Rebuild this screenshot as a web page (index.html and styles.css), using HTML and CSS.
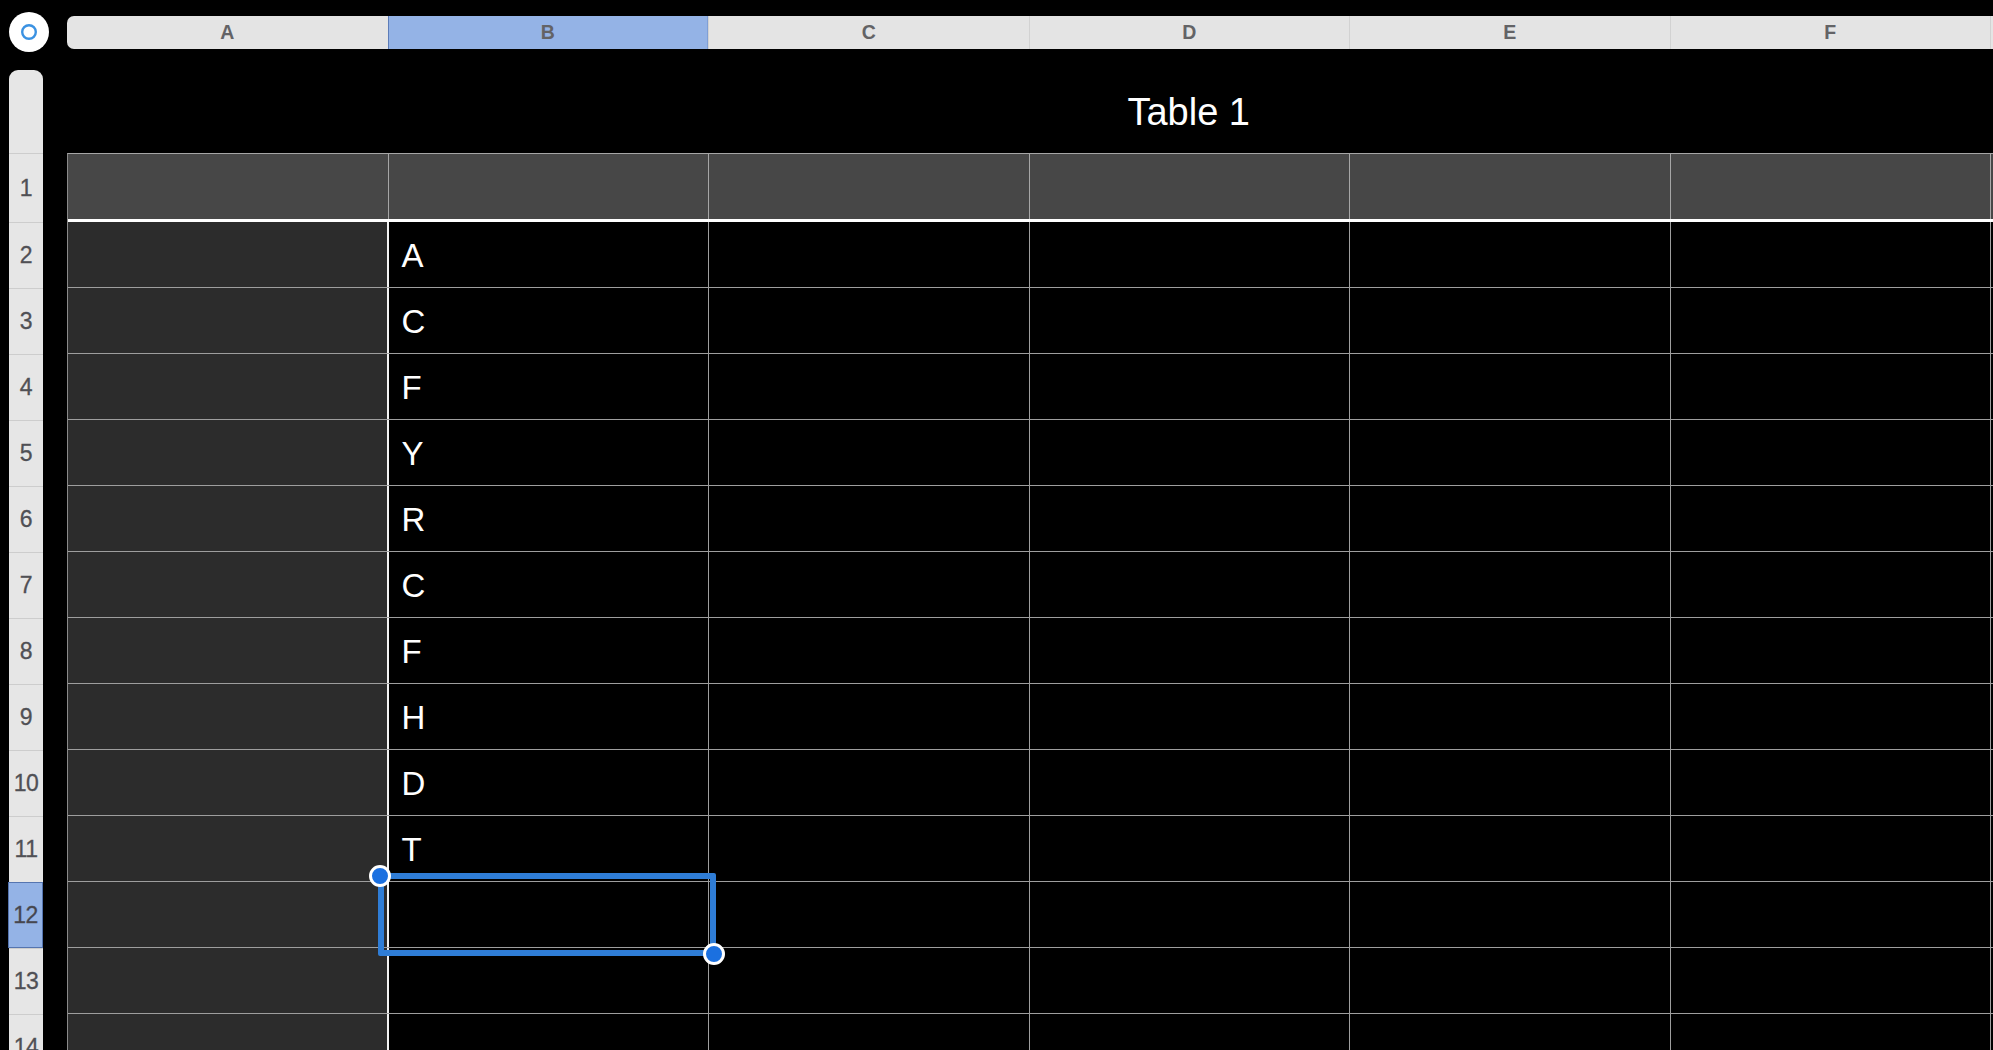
FILE: index.html
```html
<!DOCTYPE html>
<html lang="en">
<head>
<meta charset="utf-8">
<title>Table 1</title>
<link rel="stylesheet" href="styles.css">
</head>
<body>
<div class="app">
  <button class="corner" aria-label="Select table">
    <svg width="40" height="40" viewBox="0 0 40 40"><circle cx="20" cy="20" r="20" fill="#fff"/><circle cx="20" cy="20" r="6.8" fill="none" stroke="#3b92e2" stroke-width="2.4"/></svg>
  </button>
  <div class="col-header">
    <div class="ch">A</div>
    <div class="ch sel">B</div>
    <div class="ch">C</div>
    <div class="ch">D</div>
    <div class="ch">E</div>
    <div class="ch">F</div>
    <div class="ch">G</div>
  </div>
  <div class="row-header">
    <div class="rh-top"></div>
    <div class="rh first">1</div>
    <div class="rh">2</div>
    <div class="rh">3</div>
    <div class="rh">4</div>
    <div class="rh">5</div>
    <div class="rh">6</div>
    <div class="rh">7</div>
    <div class="rh">8</div>
    <div class="rh">9</div>
    <div class="rh">10</div>
    <div class="rh">11</div>
    <div class="rh sel">12</div>
    <div class="rh">13</div>
    <div class="rh">14</div>
  </div>
  <div class="table-wrap">
    <div class="title">Table 1</div>
    <div class="table">
      <div class="row head"><div class="c a"></div><div class="c"></div><div class="c"></div><div class="c"></div><div class="c"></div><div class="c"></div><div class="c"></div></div>
      <div class="row"><div class="c a"></div><div class="c">A</div><div class="c"></div><div class="c"></div><div class="c"></div><div class="c"></div><div class="c"></div></div>
      <div class="row"><div class="c a"></div><div class="c">C</div><div class="c"></div><div class="c"></div><div class="c"></div><div class="c"></div><div class="c"></div></div>
      <div class="row"><div class="c a"></div><div class="c">F</div><div class="c"></div><div class="c"></div><div class="c"></div><div class="c"></div><div class="c"></div></div>
      <div class="row"><div class="c a"></div><div class="c">Y</div><div class="c"></div><div class="c"></div><div class="c"></div><div class="c"></div><div class="c"></div></div>
      <div class="row"><div class="c a"></div><div class="c">R</div><div class="c"></div><div class="c"></div><div class="c"></div><div class="c"></div><div class="c"></div></div>
      <div class="row"><div class="c a"></div><div class="c">C</div><div class="c"></div><div class="c"></div><div class="c"></div><div class="c"></div><div class="c"></div></div>
      <div class="row"><div class="c a"></div><div class="c">F</div><div class="c"></div><div class="c"></div><div class="c"></div><div class="c"></div><div class="c"></div></div>
      <div class="row"><div class="c a"></div><div class="c">H</div><div class="c"></div><div class="c"></div><div class="c"></div><div class="c"></div><div class="c"></div></div>
      <div class="row"><div class="c a"></div><div class="c">D</div><div class="c"></div><div class="c"></div><div class="c"></div><div class="c"></div><div class="c"></div></div>
      <div class="row"><div class="c a"></div><div class="c">T</div><div class="c"></div><div class="c"></div><div class="c"></div><div class="c"></div><div class="c"></div></div>
      <div class="row"><div class="c a"></div><div class="c"></div><div class="c"></div><div class="c"></div><div class="c"></div><div class="c"></div><div class="c"></div></div>
      <div class="row"><div class="c a"></div><div class="c"></div><div class="c"></div><div class="c"></div><div class="c"></div><div class="c"></div><div class="c"></div></div>
      <div class="row"><div class="c a"></div><div class="c"></div><div class="c"></div><div class="c"></div><div class="c"></div><div class="c"></div><div class="c"></div></div>
    </div>
    <div class="selection"></div>
    <span class="handle tl"></span>
    <span class="handle br"></span>
  </div>
</div>
</body>
</html>
```

FILE: styles.css
```css
html, body {
  margin: 0;
  padding: 0;
  background: #000;
  height: 100%;
  overflow: hidden;
}

body {
  font-family: "Liberation Sans", Arial, sans-serif;
}

.app {
  box-sizing: border-box;
  height: 1050px;
  display: grid;
  grid-template-columns: 40px minmax(0, 1fr);
  grid-template-rows: 40px minmax(0, 1fr);
  column-gap: 18px;
  row-gap: 18px;
  padding: 12px 0 0 9px;
  overflow: hidden;
}

.corner {
  width: 40px;
  height: 40px;
  padding: 0;
  margin: 0;
  border: 0;
  background: transparent;
  display: block;
}
.corner svg { display: block; }

.col-header {
  align-self: start;
  margin-top: 4px;
  height: 33px;
  display: flex;
  background: #e4e4e4;
  border-radius: 7px 0 0 7px;
  overflow: hidden;
}

.ch {
  flex: 0 0 320.5px;
  box-sizing: border-box;
  display: flex;
  align-items: center;
  justify-content: center;
  font-size: 19.5px;
  font-weight: bold;
  color: #636366;
  border-left: 1px solid #d2d2d2;
}
.ch:first-child { border-left: 0; }
.ch.sel {
  background: #94b3e6;
  border-left: 1px solid #5c7cb8;
  border-right: 1px solid #7f9fd6;
}

.row-header {
  width: 34px;
  justify-self: start;
  background: #e6e6e6;
  border-radius: 9px 9px 0 0;
  display: flex;
  flex-direction: column;
}
.rh-top {
  flex: 0 0 83px;
}
.rh {
  flex: 0 0 66px;
  box-sizing: border-box;
  border-top: 1px solid #cdcdcd;
  display: flex;
  align-items: center;
  justify-content: center;
  font-size: 23px;
  color: #505055;
  -webkit-text-stroke: 0.3px #505055;
  letter-spacing: -0.5px;
}
.rh.first { flex-basis: 69px; }
.rh.sel {
  background: #94b3e6;
  border: 1px solid #5575b0;
  margin-left: -1px;
  width: 35px;
  color: #44454f;
}

.table-wrap {
  position: relative;
  width: 2243.5px;
}

.title {
  height: 83px;
  box-sizing: border-box;
  padding-top: 2px;
  display: flex;
  align-items: center;
  justify-content: center;
  color: #fff;
  font-size: 38px;
}

.table {
  border-left: 1px solid #8a8a8a;
  border-top: 1px solid #a6a6a6;
}

.row {
  display: grid;
  grid-template-columns: repeat(7, 320.5px);
  height: 66px;
  box-sizing: border-box;
  border-bottom: 1px solid #9e9e9e;
}
.row.head {
  height: 68px;
  border-bottom: 3px solid #fff;
}

.c {
  box-sizing: border-box;
  border-right: 1px solid #9e9e9e;
  background: #000;
  color: #fff;
  font-size: 33px;
  display: flex;
  align-items: center;
  padding-left: 13px;
  padding-top: 2px;
}
.c.a {
  background: #2c2c2c;
  border-right: 2px solid #f2f2f2;
}
.row.head .c {
  background: #474747;
  border-right: 1px solid #a6a6a6;
}

.selection {
  position: absolute;
  left: 311px;
  top: 803px;
  width: 338px;
  height: 83px;
  box-sizing: border-box;
  border: 6px solid #2f7dd6;
  border-radius: 2px;
}

.handle {
  position: absolute;
  width: 16px;
  height: 16px;
  border-radius: 50%;
  background: #1b70e0;
  border: 3px solid #fff;
}
.handle.tl { left: 302px; top: 795px; }
.handle.br { left: 636px; top: 873px; }
```
